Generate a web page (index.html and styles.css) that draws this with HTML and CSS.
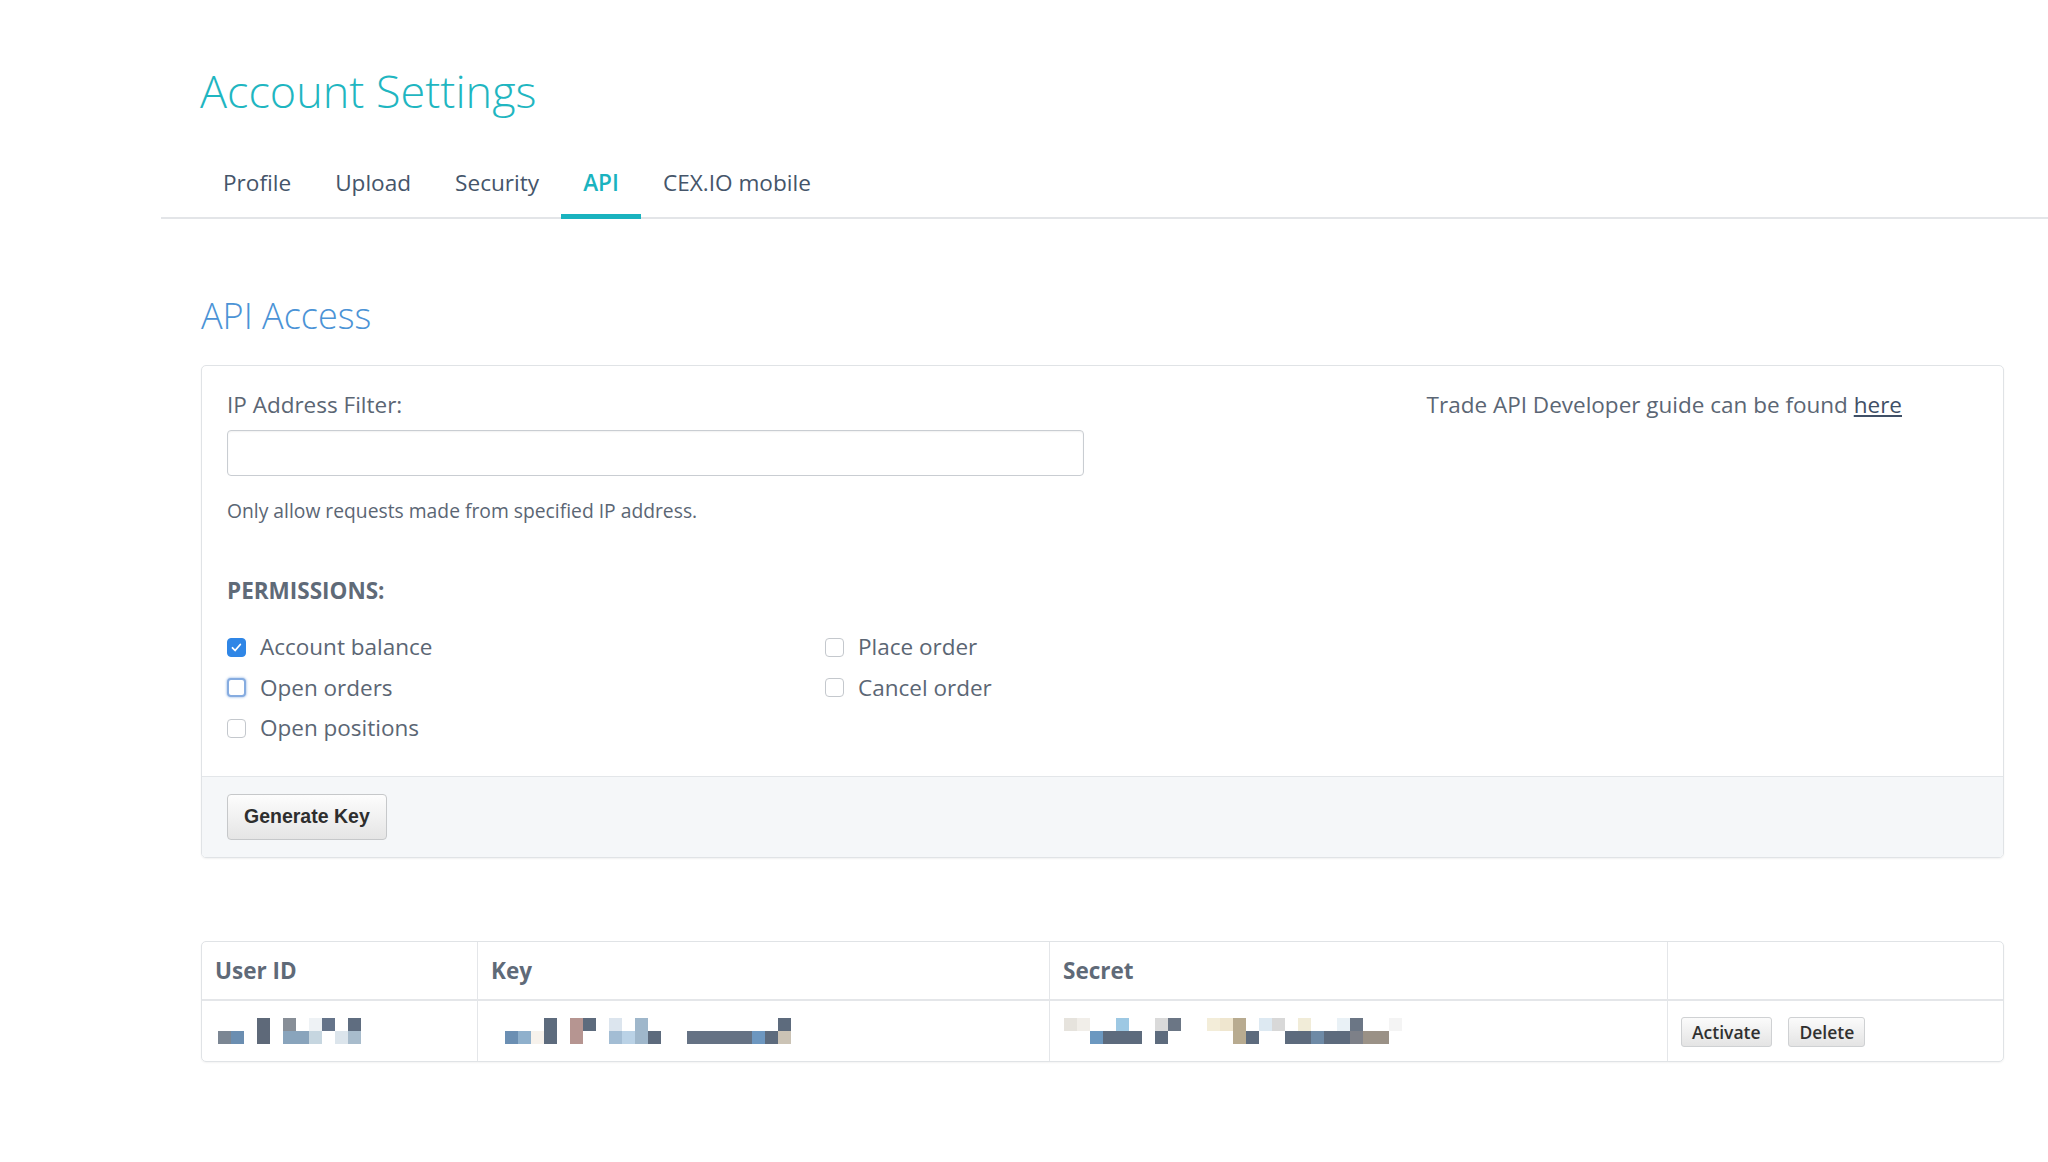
FILE: index.html
```html
<!DOCTYPE HTML>
<html>
<head>
<meta http-equiv="Content-Type" content="text/html; charset=utf-8" />
<title>Account Settings - API</title>
<link rel="stylesheet" href="styles.css">
</head>
<body>
	<h1 class="pageTitle">Account Settings</h1>

	<ul class="tabs">
		<li><a href="#">Profile</a></li>
		<li><a href="#">Upload</a></li>
		<li><a href="#">Security</a></li>
		<li class="on"><a href="#">API</a></li>
		<li><a href="#">CEX.IO mobile</a></li>
	</ul>

	<div class="content">
		<h2 class="secTitle">API Access</h2>

		<div class="panel">
			<div class="panelBody">
				<div class="formCol">
					<label class="fLabel" for="ipFilter">IP Address Filter:</label>
					<input type="text" id="ipFilter" class="fInput">
					<p class="fHelp">Only allow requests made from specified IP address.</p>

					<h3 class="permTitle">PERMISSIONS:</h3>
					<ul class="perms">
						<li><span class="cb checked"><svg width="19" height="19" viewBox="0 0 19 19"><path d="M5.5 9.8l2.6 2.7 5.2-6" fill="none" stroke="#fff" stroke-width="1.8" stroke-linecap="round" stroke-linejoin="round"/></svg></span>Account balance</li>
						<li><span class="cb focus"></span>Open orders</li>
						<li><span class="cb"></span>Open positions</li>
						<li><span class="cb"></span>Place order</li>
						<li><span class="cb"></span>Cancel order</li>
					</ul>
				</div>
				<div class="guide">
					Trade API Developer guide can be found <a href="#">here</a>
				</div>
			</div>
			<div class="panelFoot">
				<button class="btnGen">Generate Key</button>
			</div>
		</div>

		<div class="keysBox">
			<table class="keys">
				<thead>
					<tr>
						<th class="cId">User ID</th>
						<th class="cKey">Key</th>
						<th class="cSecret">Secret</th>
						<th class="cAct"></th>
					</tr>
				</thead>
				<tbody>
					<tr>
						<td>
							<!-- hidden user id -->
							<svg class="mask" width="143" height="26" viewBox="0 0 143 26">
								<rect x="0" y="13" width="13" height="13" fill="#7b8693"/>
								<rect x="13" y="13" width="13" height="13" fill="#6b8eb1"/>
								<rect x="39" y="0" width="13" height="26" fill="#5e6979"/>
								<rect x="65" y="0" width="13" height="13" fill="#878e97"/>
								<rect x="65" y="13" width="26" height="13" fill="#89a4bc"/>
								<rect x="91" y="0" width="13" height="13" fill="#eef2f5"/>
								<rect x="91" y="13" width="13" height="13" fill="#c6d6e0"/>
								<rect x="104" y="0" width="13" height="13" fill="#65748a"/>
								<rect x="117" y="13" width="13" height="13" fill="#dce5ec"/>
								<rect x="130" y="0" width="13" height="13" fill="#5f6d80"/>
								<rect x="130" y="13" width="13" height="13" fill="#a8bccc"/>
							</svg>
						</td>
						<td>
							<svg class="mask" width="286" height="26" viewBox="0 0 286 26">
								<rect x="0" y="13" width="13" height="13" fill="#6b8fb3"/>
								<rect x="13" y="13" width="13" height="13" fill="#8fb0cc"/>
								<rect x="26" y="13" width="13" height="13" fill="#f7f2ec"/>
								<rect x="39" y="0" width="13" height="26" fill="#5d6b7d"/>
								<rect x="65" y="0" width="13" height="26" fill="#b69591"/>
								<rect x="78" y="0" width="13" height="13" fill="#5d6b7d"/>
								<rect x="104" y="0" width="13" height="13" fill="#dce5ee"/>
								<rect x="104" y="13" width="13" height="13" fill="#a3bdd4"/>
								<rect x="117" y="13" width="13" height="13" fill="#bad2e6"/>
								<rect x="130" y="0" width="13" height="26" fill="#9fb7cb"/>
								<rect x="143" y="13" width="13" height="13" fill="#5d6b7d"/>
								<rect x="182" y="13" width="65" height="13" fill="#657284"/>
								<rect x="247" y="13" width="13" height="13" fill="#6d97c0"/>
								<rect x="260" y="13" width="13" height="13" fill="#5d6b7d"/>
								<rect x="273" y="0" width="13" height="13" fill="#5d6b7d"/>
								<rect x="273" y="13" width="13" height="13" fill="#cbc3b5"/>
							</svg>
						</td>
						<td class="cellSecret">
							<svg class="mask" width="338" height="26" viewBox="0 0 338 26">
								<rect x="0" y="0" width="13" height="13" fill="#e6e3dd"/>
								<rect x="13" y="0" width="13" height="13" fill="#f1eee9"/>
								<rect x="26" y="13" width="13" height="13" fill="#6c98c0"/>
								<rect x="39" y="13" width="39" height="13" fill="#5d6b7d"/>
								<rect x="52" y="0" width="13" height="13" fill="#9dc8e3"/>
								<rect x="91" y="0" width="13" height="13" fill="#dadada"/>
								<rect x="91" y="13" width="13" height="13" fill="#5d6b7d"/>
								<rect x="104" y="0" width="13" height="13" fill="#6b7685"/>
								<rect x="143" y="0" width="13" height="13" fill="#f3edd9"/>
								<rect x="156" y="0" width="13" height="13" fill="#efe6cf"/>
								<rect x="169" y="0" width="13" height="26" fill="#b8ab90"/>
								<rect x="182" y="13" width="13" height="13" fill="#5d6b7d"/>
								<rect x="195" y="0" width="13" height="13" fill="#dde9f2"/>
								<rect x="208" y="0" width="13" height="13" fill="#d8d8d8"/>
								<rect x="221" y="13" width="26" height="13" fill="#5d6b7d"/>
								<rect x="234" y="0" width="13" height="13" fill="#f1ecd8"/>
								<rect x="247" y="13" width="13" height="13" fill="#6e8aa6"/>
								<rect x="260" y="13" width="26" height="13" fill="#5d6b7d"/>
								<rect x="273" y="0" width="13" height="13" fill="#e9f1f6"/>
								<rect x="286" y="0" width="13" height="13" fill="#6b7685"/>
								<rect x="286" y="13" width="13" height="13" fill="#7d8088"/>
								<rect x="299" y="13" width="26" height="13" fill="#9a9186"/>
								<rect x="325" y="0" width="13" height="13" fill="#f4f4f4"/>
							</svg>
						</td>
						<td class="acts">
							<button class="btnSm">Activate</button>
							<button class="btnSm">Delete</button>
						</td>
					</tr>
				</tbody>
			</table>
		</div>
	</div>
</body>
</html>
```

FILE: styles.css
```css
* {
	margin: 0;
	padding: 0;
}

body {
	background: #fff;
	font-family: "Open Sans", "Liberation Sans", sans-serif;
	font-size: 22.5px;
	color: #5b6674;
}

ul {
	list-style: none;
}

/**** 页面标题 ****/
.pageTitle {
	margin: 64px 0 0 200px;
	font-size: 45px;
	line-height: 54px;
	font-weight: 300;
	color: #1fb6c1;
}

/**** 选项卡 ****/
.tabs {
	display: flex;
	margin: 50px 0 0 161px;
	padding-left: 40px;
	border-bottom: 2px solid #e3e5e8;
}

.tabs li {
	margin-bottom: -2px;
}

.tabs li a {
	display: block;
	padding: 0 22px 16px;
	line-height: 30px;
	font-size: 22.6px;
	color: #45556a;
	text-decoration: none;
	border-bottom: 5px solid transparent;
}

.tabs li.on a {
	color: #1ab3bf;
	font-weight: 600;
	border-bottom-color: #1ab3bf;
}

.content {
	padding: 0 44px 80px 201px;
}

.secTitle {
	margin-top: 76px;
	font-size: 36px;
	line-height: 42px;
	font-weight: 300;
	color: #4b93d6;
}

/**** API 面板 ****/
.panel {
	margin-top: 28px;
	border: 1px solid #e0e3e6;
	border-radius: 5px;
	box-shadow: 0 1px 2px rgba(0, 0, 0, 0.06);
	overflow: hidden;
}

.panelBody {
	display: flex;
	padding: 24px 25px 27px;
}

.formCol {
	width: 857px;
}

.fLabel {
	display: block;
	line-height: 30px;
	margin-bottom: 10px;
}

.fInput {
	display: block;
	width: 100%;
	height: 46px;
	box-sizing: border-box;
	border: 1px solid #c9cdd2;
	border-radius: 4px;
	box-shadow: inset 0 1px 2px rgba(0, 0, 0, 0.06);
	font: inherit;
	padding: 0 12px;
	outline: none;
}

.fHelp {
	margin-top: 22px;
	font-size: 19.3px;
	line-height: 26px;
}

.permTitle {
	margin-top: 53px;
	font-size: 22.5px;
	line-height: 28px;
	font-weight: 700;
	color: #5f6a78;
}

.perms {
	display: grid;
	grid-template-columns: 598px 1fr;
	grid-template-rows: repeat(3, 40.5px);
	grid-auto-flow: column;
	margin-top: 22px;
}

.perms li {
	display: flex;
	align-items: center;
	line-height: 30px;
	white-space: nowrap;
}

.cb {
	display: inline-block;
	width: 19px;
	height: 19px;
	box-sizing: border-box;
	margin-right: 14px;
	border: 1px solid #c4c8cd;
	border-radius: 4px;
	background: #fff;
}

.cb svg {
	display: block;
	margin: -1px;
}

.cb.checked {
	background: #2f86e6;
	border-color: #2f86e6;
}

.cb.focus {
	border: 2px solid #86ace0;
	box-shadow: 0 0 2px 1px rgba(86, 140, 215, 0.35);
}

.guide {
	margin-left: auto;
	padding-right: 76px;
	line-height: 30px;
	white-space: nowrap;
}

.guide a {
	color: #3f4f66;
}

.panelFoot {
	padding: 17px 25px;
	background: #f5f7f9;
	border-top: 1px solid #e3e6e9;
}

.btnGen {
	height: 46px;
	padding: 0 16px;
	border: 1px solid #c6c8ca;
	border-radius: 4px;
	background: linear-gradient(#fdfdfd, #e5e5e5);
	font-family: "Liberation Sans", Arial, sans-serif;
	font-size: 19.5px;
	font-weight: bold;
	color: #2e2e2e;
}

/**** 密钥列表 ****/
.keysBox {
	margin-top: 83px;
	border: 1px solid #e0e3e6;
	border-radius: 5px;
	box-shadow: 0 1px 2px rgba(0, 0, 0, 0.05);
	overflow: hidden;
}

.keys {
	width: 100%;
	border-collapse: collapse;
	table-layout: fixed;
}

.keys th {
	height: 57px;
	padding: 0 13px;
	text-align: left;
	font-size: 22.5px;
	font-weight: 700;
	color: #5f6a78;
	border-bottom: 2px solid #e4e6e9;
}

.keys td {
	height: 60px;
	padding: 0 13px;
	vertical-align: middle;
}

.keys th + th,
.keys td + td {
	border-left: 1px solid #e4e6e9;
}

.keys .cId {
	width: 249px;
}

.keys .cKey {
	width: 545px;
}

.keys .cSecret {
	width: 591px;
}

.mask {
	display: block;
	margin-left: 3px;
}

.keys td + td .mask {
	margin-left: 14px;
}

.keys td.cellSecret .mask {
	margin-left: 1px;
}

.acts {
	white-space: nowrap;
}

.btnSm {
	height: 30px;
	padding: 0 10px;
	margin-right: 11px;
	border: 1px solid #cfd1d3;
	border-radius: 3px;
	background: linear-gradient(#fbfbfb, #e4e4e4);
	font-family: "Open Sans", sans-serif;
	font-size: 17.5px;
	font-weight: 600;
	color: #303030;
}
```
